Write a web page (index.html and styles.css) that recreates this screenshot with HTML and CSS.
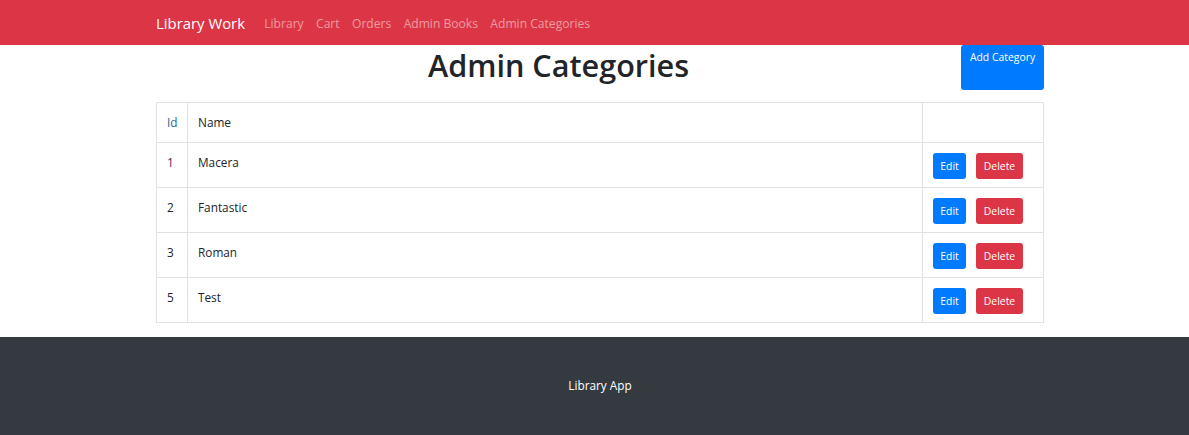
FILE: index.html
```html
<!DOCTYPE html>
<html lang="en">
<head>
<meta charset="utf-8">
<title>Admin Categories</title>
<link rel="stylesheet" href="styles.css">
</head>
<body>
<nav class="navbar">
  <div class="container nav-inner">
    <a class="brand" href="#">Library Work</a>
    <ul class="nav-links">
      <li><a href="#">Library</a></li>
      <li><a href="#">Cart</a></li>
      <li><a href="#">Orders</a></li>
      <li><a href="#">Admin Books</a></li>
      <li><a href="#">Admin Categories</a></li>
    </ul>
  </div>
</nav>
<main class="container">
  <div class="title-row">
    <h1 class="title">Admin Categories</h1>
    <a class="btn btn-add" href="#">Add Category</a>
  </div>
  <table class="table">
    <thead>
      <tr><th class="col-id id-head">Id</th><th>Name</th><th class="col-act"></th></tr>
    </thead>
    <tbody>
      <tr><td class="col-id id-first">1</td><td>Macera</td><td class="col-act"><a class="btn btn-sm btn-blue" href="#">Edit</a><a class="btn btn-sm btn-red" href="#">Delete</a></td></tr>
      <tr><td class="col-id">2</td><td>Fantastic</td><td class="col-act"><a class="btn btn-sm btn-blue" href="#">Edit</a><a class="btn btn-sm btn-red" href="#">Delete</a></td></tr>
      <tr><td class="col-id">3</td><td>Roman</td><td class="col-act"><a class="btn btn-sm btn-blue" href="#">Edit</a><a class="btn btn-sm btn-red" href="#">Delete</a></td></tr>
      <tr><td class="col-id">5</td><td>Test</td><td class="col-act"><a class="btn btn-sm btn-blue" href="#">Edit</a><a class="btn btn-sm btn-red" href="#">Delete</a></td></tr>
    </tbody>
  </table>
</main>
<footer class="footer">
  <div class="footer-text">Library App</div>
</footer>
</body>
</html>
```
FILE: styles.css
```css
* { box-sizing: border-box; }
html, body { margin: 0; padding: 0; }
body {
  font-family: "Open Sans", "Noto Sans", sans-serif;
  color: #212529;
  background: #fff;
  font-size: 11.8px;
  line-height: 19.2px;
}
a { text-decoration: none; }
.container {
  width: 888px;
  margin-left: 156px;
}
.navbar {
  background: #dc3545;
  height: 45px;
}
.nav-inner {
  display: flex;
  align-items: center;
  height: 45px;
}
.brand {
  color: #fff;
  font-size: 14.9px;
  line-height: 24px;
  margin-right: 13px;
}
.nav-links {
  display: flex;
  list-style: none;
  margin: 0;
  padding: 2px 0 0;
}
.nav-links a {
  display: block;
  padding: 6px 6.2px;
  color: rgba(255,255,255,.5);
  font-size: 12.1px;
}
.title-row {
  display: flex;
  align-items: flex-start;
  height: 57px;
}
.title {
  flex: 1;
  text-align: center;
  margin: 1px 0 0;
  font-size: 30.6px;
  line-height: 38px;
  font-weight: 600;
}
.btn {
  display: inline-block;
  color: #fff;
  border-radius: 3px;
  text-align: center;
}
.btn-add {
  background: #007bff;
  width: 83px;
  height: 45px;
  font-size: 10.4px;
  line-height: 16px;
  padding-top: 4px;
}
.table {
  width: 100%;
  border-collapse: collapse;
  margin-bottom: 14px;
}
.table th, .table td {
  border: 1px solid #dee2e6;
  padding: 9.6px 10px;
  text-align: left;
  vertical-align: top;
  font-weight: 400;
  height: 40px;
}
.table td { height: 45px; padding-bottom: 8px; }
.table th.col-id, .table td.col-id { width: 31px; padding-left: 10px; padding-right: 4px; }
.col-act { width: 121px; }
.id-head { color: #1e6690; }
.id-first { color: #4a2a5a; }
.btn-sm {
  font-size: 10.4px;
  line-height: 16px;
  padding: 5px 0;
  height: 26px;
  border-radius: 3px;
}
.btn-blue { background: #007bff; width: 33px; margin-right: 10px; }
.btn-red { background: #dc3545; width: 47px; }
.footer {
  background: #343a40;
  height: 98px;
  display: flex;
  align-items: center;
  justify-content: center;
}
.footer-text {
  color: #fff;
  font-size: 11.8px;
  line-height: 19px;
  margin-left: 11px;
  margin-top: -2px;
}
```
